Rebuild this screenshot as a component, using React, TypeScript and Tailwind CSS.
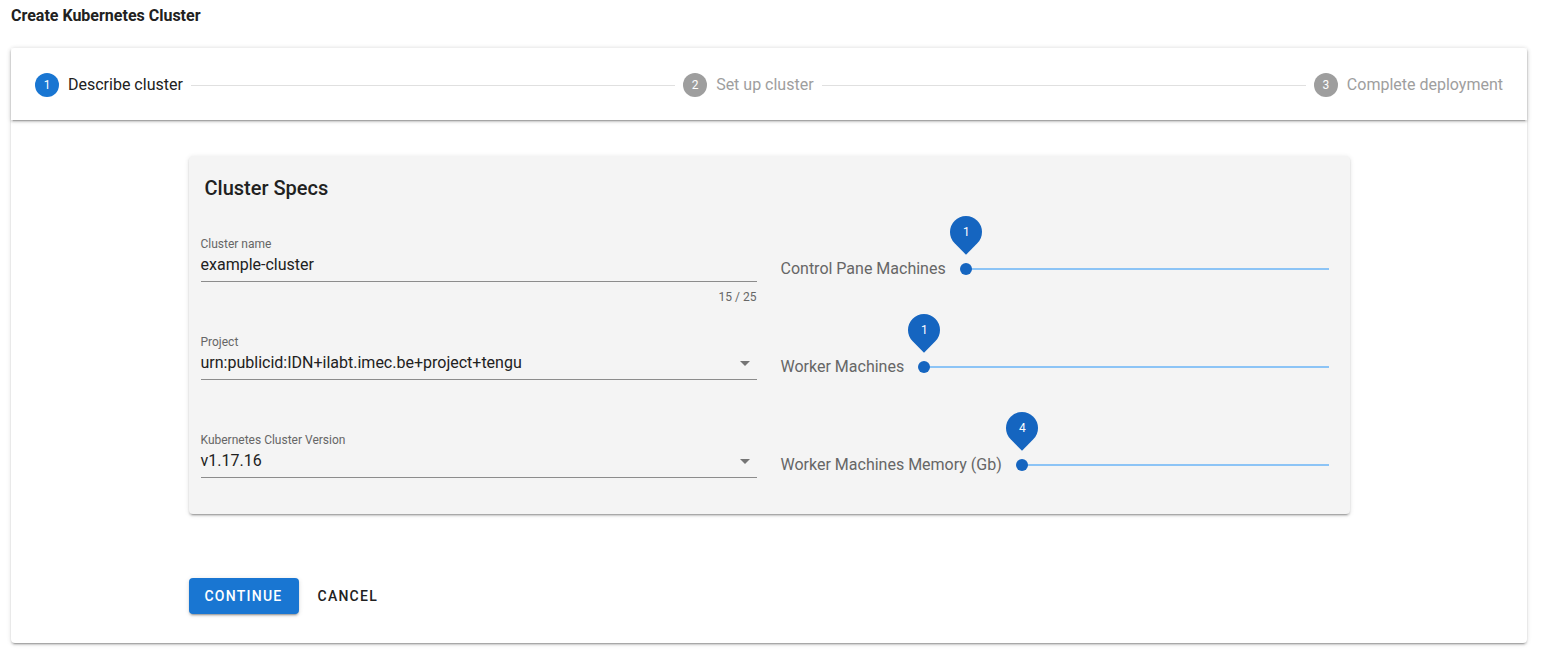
import React from 'react';

type Step = { n: number; label: string; active?: boolean };

const steps: Step[] = [
  { n: 1, label: 'Describe cluster', active: true },
  { n: 2, label: 'Set up cluster' },
  { n: 3, label: 'Complete deployment' },
];

type Field = { label: string; value: string; counter?: string; select?: boolean };
type Slide = { label: string; value: number };

const rows: { field: Field; slider: Slide }[] = [
  { field: { label: 'Cluster name', value: 'example-cluster', counter: '15 / 25' }, slider: { label: 'Control Pane Machines', value: 1 } },
  { field: { label: 'Project', value: 'urn:publicid:IDN+ilabt.imec.be+project+tengu', select: true }, slider: { label: 'Worker Machines', value: 1 } },
  { field: { label: 'Kubernetes Cluster Version', value: 'v1.17.16', select: true }, slider: { label: 'Worker Machines Memory (Gb)', value: 4 } },
];

function StepItem({ step }: { step: Step }) {
  return (
    <div className="flex items-center">
      <span
        className={`flex h-6 w-6 items-center justify-center rounded-full text-xs text-white ${step.active ? 'bg-[#1976d2]' : 'bg-[#9e9e9e]'}`}
      >
        {step.n}
      </span>
      <span className={`ml-[9px] text-base leading-5 ${step.active ? 'text-[#212121]' : 'text-[#9e9e9e]'}`}>{step.label}</span>
    </div>
  );
}

function TextField({ field }: { field: Field }) {
  return (
    <div className="pt-2">
      <div className="text-xs leading-4 text-[#666666]">{field.label}</div>
      <div className="mt-[3px] flex h-5 items-center justify-between text-base leading-5 text-[#212121]">
        <span>{field.value}</span>
        {field.select && (
          <span className="mr-[7px] h-0 w-0 border-t-[5px] border-r-[5px] border-l-[5px] border-t-[#757575] border-r-transparent border-l-transparent" />
        )}
      </div>
      <div className="mt-[6px] h-px bg-[#8c8c8c]" />
      {field.counter && <div className="mt-2 text-right text-xs leading-[14px] text-[#666666]">{field.counter}</div>}
    </div>
  );
}

function Slider({ slide }: { slide: Slide }) {
  return (
    <div className="pt-[31px]">
      <div className="flex h-5 items-center">
        <span className="whitespace-nowrap text-base leading-5 text-[#666666]">{slide.label}</span>
        <div className="relative ml-5 h-5 flex-1">
          <div className="absolute top-[9px] right-0 left-0 h-[2px] bg-[#8cc4f6]" />
          <div className="absolute top-1 left-[-6px] h-3 w-3 rounded-full bg-[#1565c0]" />
          <div className="absolute top-[-43px] left-[-16px] flex h-8 w-8 rotate-45 items-center justify-center rounded-[50%_50%_0] bg-[#1565c0]">
            <span className="-rotate-45 text-xs text-white">{slide.value}</span>
          </div>
        </div>
      </div>
    </div>
  );
}

export default function App() {
  return (
    <div className="min-h-screen bg-white font-['Roboto',sans-serif] text-[#212121]">
      <div className="px-[11px] pt-[6px]">
        <h1 className="text-base leading-5 font-bold">Create Kubernetes Cluster</h1>
      </div>

      <div className="mt-[22px] ml-[11px] w-[1516px] rounded bg-white shadow-[0_3px_1px_-2px_rgba(0,0,0,0.2),0_2px_2px_0_rgba(0,0,0,0.14),0_1px_5px_0_rgba(0,0,0,0.12)]">
        <div className="relative flex h-[72px] items-center px-6 pt-[2px] shadow-[0_3px_1px_-2px_rgba(0,0,0,0.2),0_2px_2px_0_rgba(0,0,0,0.14),0_1px_5px_0_rgba(0,0,0,0.12)]">
          {steps.map((s, i) => (
            <React.Fragment key={s.n}>
              {i > 0 && <div className="mx-2 h-px flex-1 bg-[#e0e0e0]" />}
              <StepItem step={s} />
            </React.Fragment>
          ))}
        </div>

        <div className="pt-9 pb-[29px]">
          <div className="mx-auto w-[1161px]">
            <div className="rounded bg-[#f4f4f4] pt-4 pb-[14px] shadow-[0_3px_1px_-2px_rgba(0,0,0,0.2),0_2px_2px_0_rgba(0,0,0,0.14),0_1px_5px_0_rgba(0,0,0,0.12)]">
              <h2 className="h-8 pl-4 text-xl leading-8 font-medium text-[#212121]">Cluster Specs</h2>
              <div className="mt-[24px] flex flex-col gap-[22px]">
                {rows.map((r) => (
                  <div key={r.field.label} className="flex h-[76px] gap-6 pr-[21px] pl-3">
                    <div className="w-[556px]">
                      <TextField field={r.field} />
                    </div>
                    <div className="flex-1">
                      <Slider slide={r.slider} />
                    </div>
                  </div>
                ))}
              </div>
            </div>

            <div className="mt-16 flex items-center">
              <button className="h-9 w-[110px] rounded bg-[#1976d2] text-sm font-medium tracking-[1.25px] text-white uppercase shadow-[0_3px_1px_-2px_rgba(0,0,0,0.2),0_2px_2px_0_rgba(0,0,0,0.14),0_1px_5px_0_rgba(0,0,0,0.12)]">
                Continue
              </button>
              <button className="ml-[3px] h-9 px-4 text-sm font-medium tracking-[1.25px] text-[#212121] uppercase">
                Cancel
              </button>
            </div>
          </div>
        </div>
      </div>
    </div>
  );
}
